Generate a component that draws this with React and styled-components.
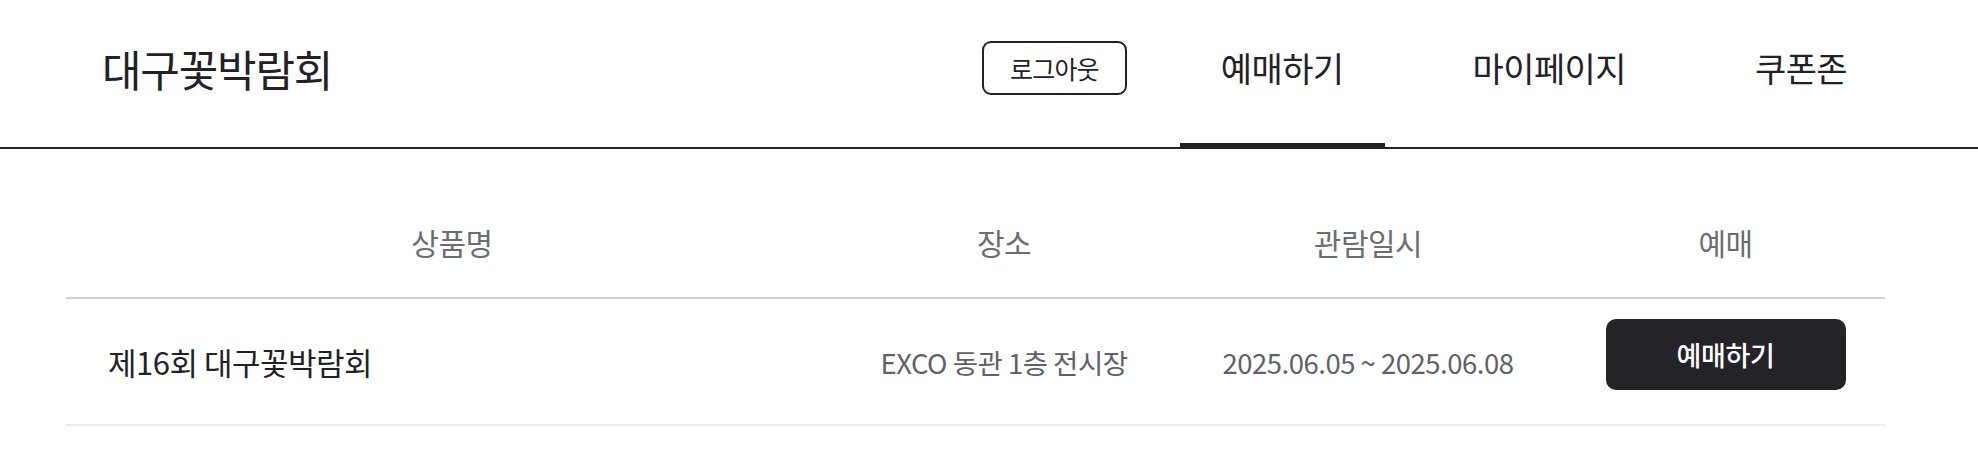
import React from 'react'
import styled, { createGlobalStyle } from 'styled-components'

const GlobalStyle = createGlobalStyle`
  body {
    margin: 0;
    background: #ffffff;
    font-family: "Noto Sans CJK KR", "Noto Sans", sans-serif;
    color: #222226;
  }
  * { box-sizing: border-box; }
`

const Header = styled.header`
  display: flex;
  align-items: stretch;
  height: 149px;
  padding: 0 90px 0 102px;
  border-bottom: 2px solid #222226;
`

const Logo = styled.h1`
  align-self: center;
  margin: 0 0 12px 0;
  font-size: 43px;
  font-weight: 400;
  letter-spacing: -1.2px;
  color: #222226;
`

const Nav = styled.nav`
  margin-left: auto;
  display: flex;
  align-items: stretch;
  gap: 47px;
`

const LogoutButton = styled.button`
  align-self: center;
  margin: 0 6px 12px 0;
  height: 54px;
  padding: 0 26px;
  border: 2px solid #222226;
  border-radius: 9px;
  background: #fff;
  font-family: inherit;
  font-size: 25px;
  letter-spacing: -0.8px;
  color: #222226;
  cursor: pointer;
`

const NavItem = styled.a`
  position: relative;
  display: flex;
  align-items: center;
  padding: 0 41px 12px;
  font-size: 34px;
  letter-spacing: -0.6px;
  color: #222226;
  text-decoration: none;

  &::after {
    content: '';
    position: absolute;
    left: 0;
    right: 0;
    bottom: -2px;
    height: 6px;
    background: ${p => (p.$active ? '#222226' : 'transparent')};
  }
`

const Main = styled.main`
  padding: 44px 93px 0 66px;
`

const Row = styled.div`
  display: grid;
  grid-template-columns: 772px 332px 396px 1fr;
  align-items: center;
  height: ${p => (p.$head ? '106px' : '127px')};
  border-bottom: 2px solid ${p => (p.$head ? '#d2d2d7' : '#ebebef')};
`

const HeadCell = styled.div`
  text-align: center;
  font-size: 30px;
  letter-spacing: -0.5px;
  color: #6b6d73;
  padding-bottom: 6px;
`

const Cell = styled.div`
  text-align: ${p => (p.$left ? 'left' : 'center')};
  padding-left: ${p => (p.$left ? '42px' : '0')};
  font-size: ${p => (p.$left ? '31px' : '27.5px')};
  color: ${p => (p.$left ? '#222226' : '#5f6167')};
  letter-spacing: -0.5px;
`

const BookButton = styled.button`
  display: block;
  margin: 0 auto 14px;
  width: 240px;
  height: 71px;
  border: none;
  border-radius: 10px;
  background: #242328;
  color: #ffffff;
  font-family: inherit;
  font-size: 27px;
  font-weight: 500;
  letter-spacing: -0.4px;
  cursor: pointer;
`

export default function App() {
  return (
    <>
      <GlobalStyle />
      <Header>
        <Logo>대구꽃박람회</Logo>
        <Nav>
          <LogoutButton>로그아웃</LogoutButton>
          <NavItem $active>예매하기</NavItem>
          <NavItem>마이페이지</NavItem>
          <NavItem>쿠폰존</NavItem>
        </Nav>
      </Header>
      <Main>
        <Row $head>
          <HeadCell>상품명</HeadCell>
          <HeadCell>장소</HeadCell>
          <HeadCell>관람일시</HeadCell>
          <HeadCell>예매</HeadCell>
        </Row>
        <Row>
          <Cell $left>제16회 대구꽃박람회</Cell>
          <Cell>EXCO 동관 1층 전시장</Cell>
          <Cell>2025.06.05 ~ 2025.06.08</Cell>
          <Cell>
            <BookButton>예매하기</BookButton>
          </Cell>
        </Row>
      </Main>
    </>
  )
}
